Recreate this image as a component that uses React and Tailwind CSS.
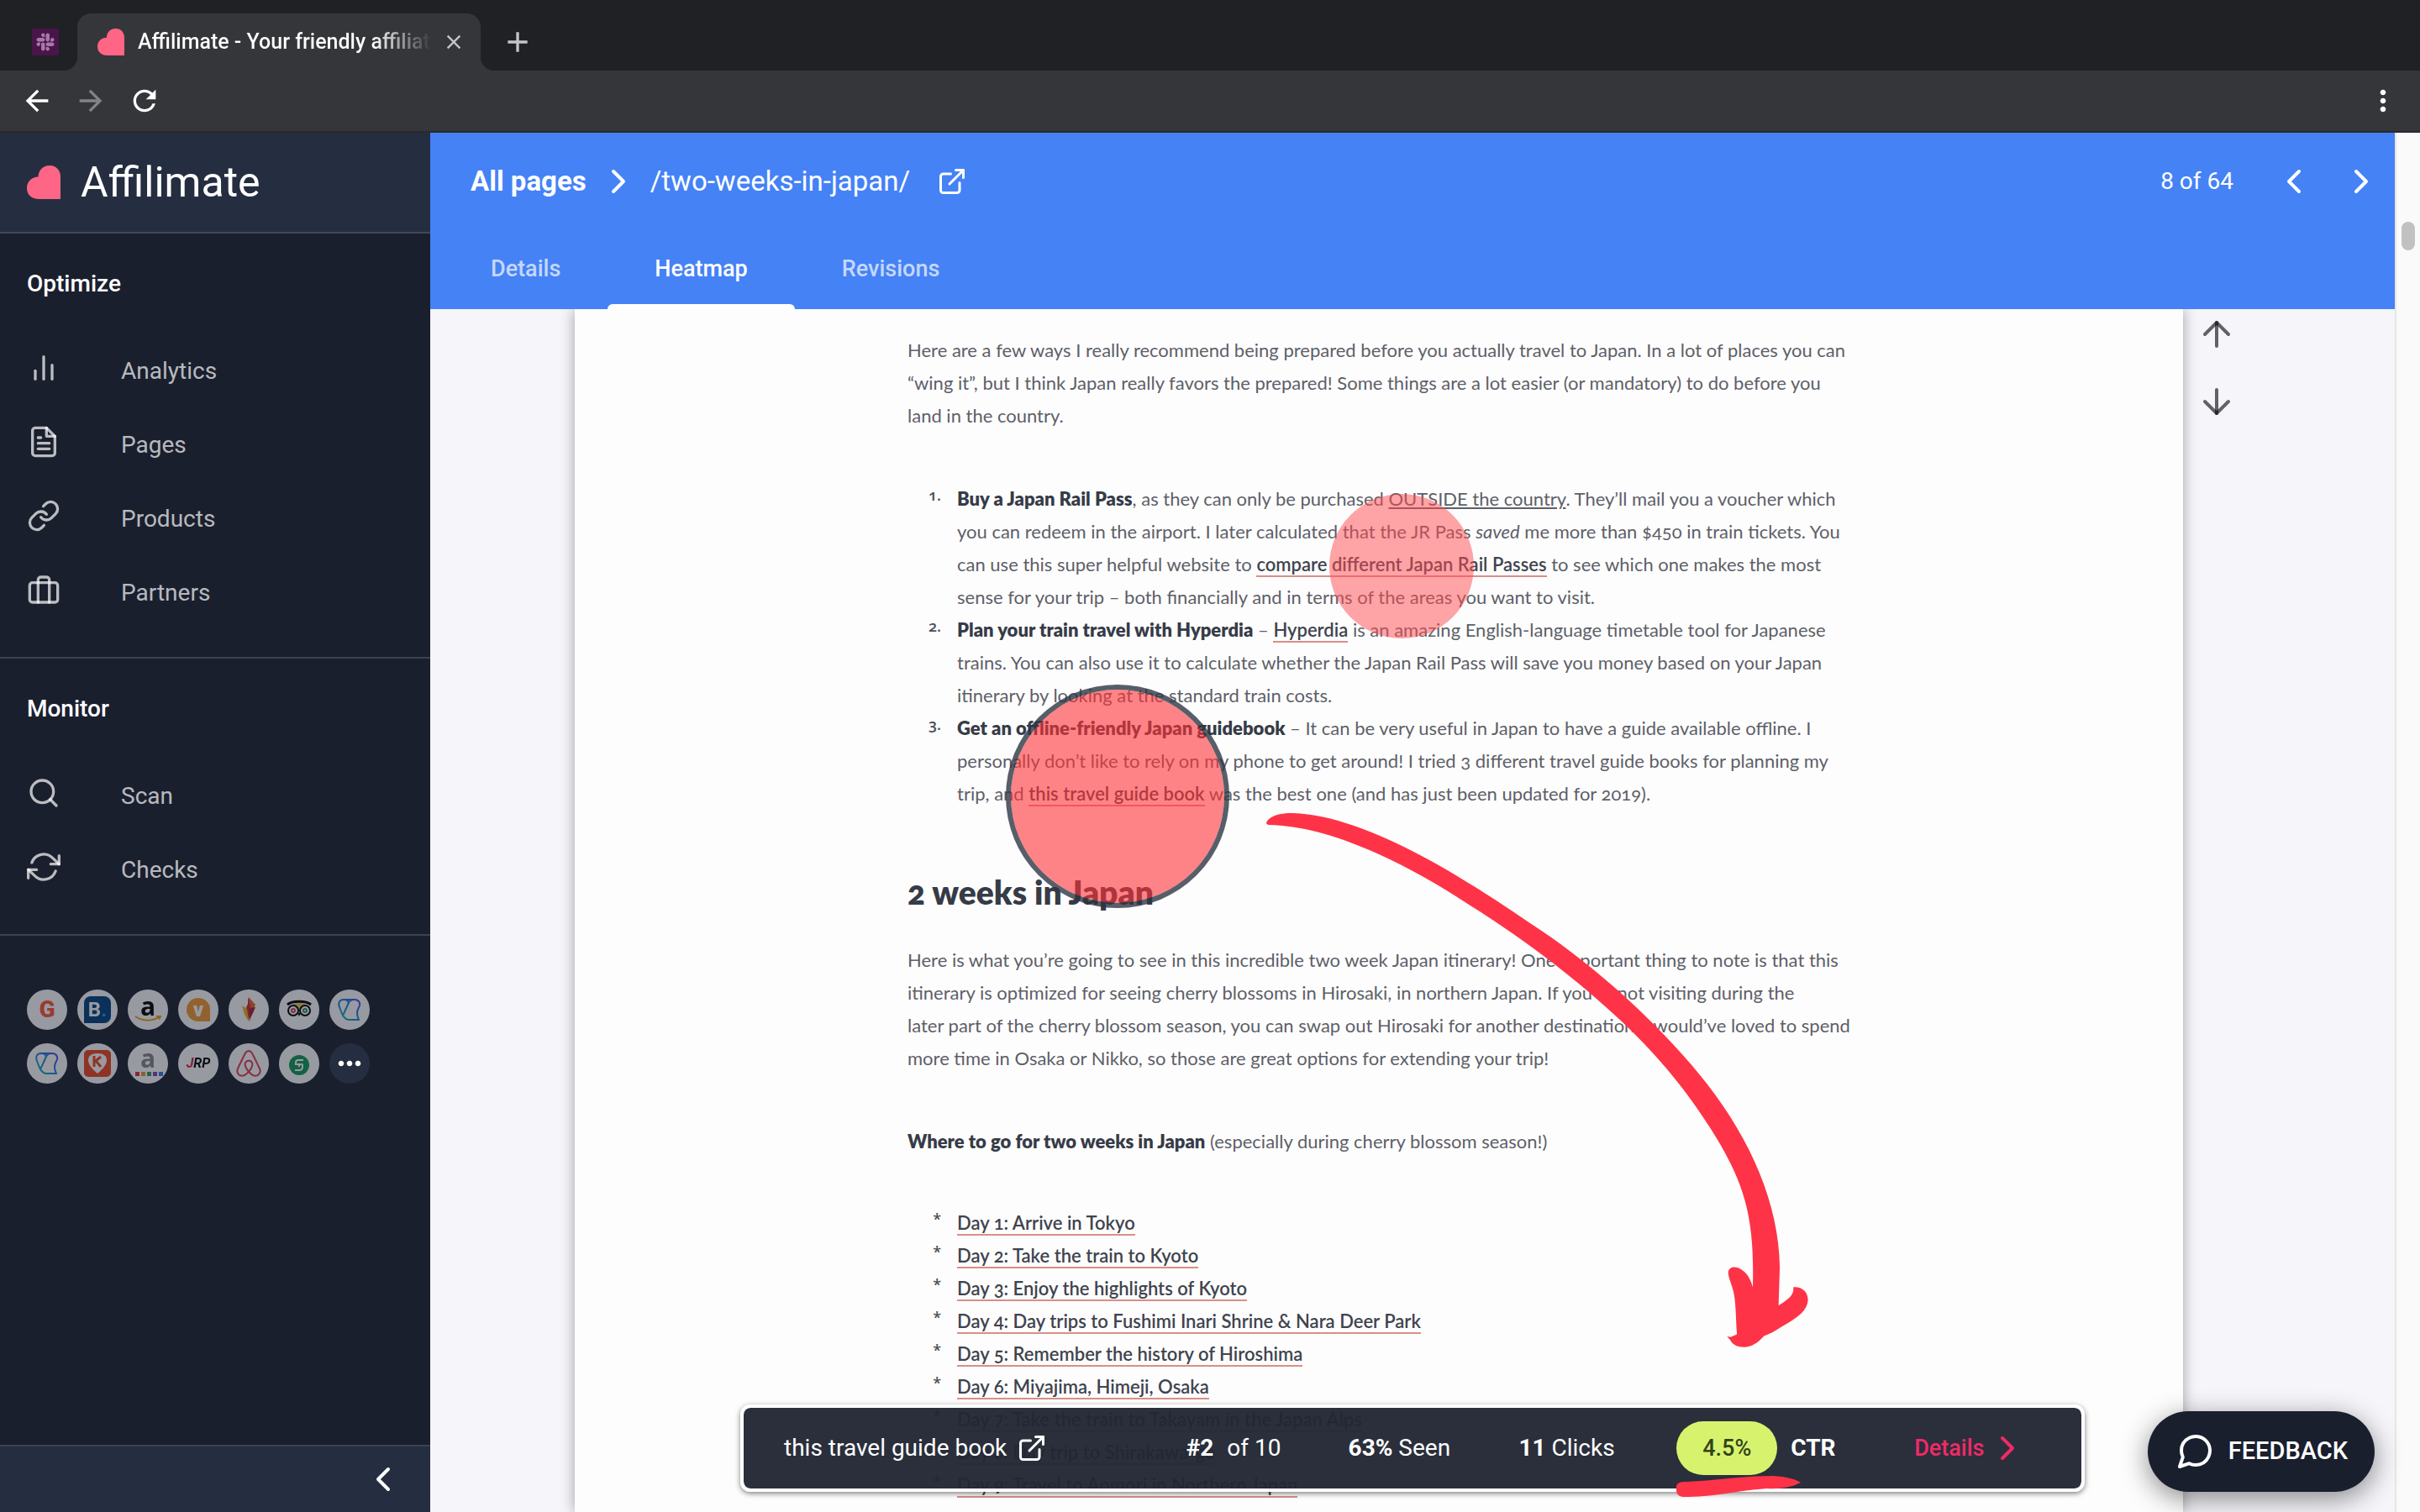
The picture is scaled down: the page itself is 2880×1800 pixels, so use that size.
import {
  FiArrowDown,
  FiArrowUp,
  FiBarChart2,
  FiBriefcase,
  FiChevronLeft,
  FiChevronRight,
  FiExternalLink,
  FiFileText,
  FiLink,
  FiMessageCircle,
  FiRefreshCw,
  FiSearch,
} from 'react-icons/fi'
import { MdAdd, MdArrowBack, MdArrowForward, MdClose, MdMoreHoriz, MdMoreVert, MdRefresh } from 'react-icons/md'
import { FaAirbnb, FaSlack } from 'react-icons/fa'

const sections = [
  {
    title: 'Optimize',
    items: [
      { label: 'Analytics', icon: FiBarChart2 },
      { label: 'Pages', icon: FiFileText },
      { label: 'Products', icon: FiLink },
      { label: 'Partners', icon: FiBriefcase },
    ],
  },
  {
    title: 'Monitor',
    items: [
      { label: 'Scan', icon: FiSearch },
      { label: 'Checks', icon: FiRefreshCw },
    ],
  },
]

const tabs = ['Details', 'Heatmap', 'Revisions']

const days = [
  'Day 1: Arrive in Tokyo',
  'Day 2: Take the train to Kyoto',
  'Day 3: Enjoy the highlights of Kyoto',
  'Day 4: Day trips to Fushimi Inari Shrine & Nara Deer Park',
  'Day 5: Remember the history of Hiroshima',
  'Day 6: Miyajima, Himeji, Osaka',
  'Day 7: Take the train to Takayam in the Japan Alps',
  'Day 8: Day trip to Shirakawa-go',
  'Day 9: Travel to Aomori in Northern Japan',
]

function Logo({ className }) {
  return (
    <svg viewBox="0 0 40 40" className={className} aria-hidden="true">
      <path
        d="M40 40H14C6 40 0 35 0 27C0 19 6 13.500 13.500 13.500C14 5.500 19 0 27 0C35 0 40 6 40 13Z"
        fill="#ff6584"
      />
    </svg>
  )
}

function BrowserChrome() {
  return (
    <header className="bg-[#202124]">
      <div className="flex h-[84px] items-end">
        <div className="flex h-[68px] w-[92px] items-center pl-[38px]">
          <span className="flex size-8 items-center justify-center rounded-xs bg-[#4a154b] text-[#a878a8]">
            <FaSlack className="size-6" />
          </span>
        </div>
        <div className="relative flex h-[68px] w-[480px] items-center rounded-t-2xl bg-[#35363a] pr-[18px] pl-6">
          <Logo className="size-8 shrink-0" />
          <span className="ml-4 flex-1 overflow-hidden bg-linear-to-r from-white from-80% to-transparent bg-clip-text text-[25px] font-medium whitespace-nowrap text-transparent">
            Affilimate - Your friendly affiliate
          </span>
          <button aria-label="Close tab" className="ml-3 text-[#c3c5c9]">
            <MdClose className="size-7" />
          </button>
          <svg viewBox="0 0 16 16" className="absolute bottom-0 -left-4 size-4 fill-[#35363a]">
            <path d="M16 0V16H0A16 16 0 0 0 16 0Z" />
          </svg>
          <svg viewBox="0 0 16 16" className="absolute -right-4 bottom-0 size-4 fill-[#35363a]">
            <path d="M0 0V16H16A16 16 0 0 1 0 0Z" />
          </svg>
        </div>
        <button aria-label="New tab" className="ml-6 flex h-[68px] items-center text-[#c3c5c9]">
          <MdAdd className="size-10" />
        </button>
      </div>
      <div className="flex h-[74px] items-center gap-6 border-b-2 border-[#28292c] bg-[#35363a] px-6 text-white">
        <button aria-label="Back">
          <MdArrowBack className="size-10" />
        </button>
        <button aria-label="Forward" className="text-[#828387]">
          <MdArrowForward className="size-10" />
        </button>
        <button aria-label="Reload" className="flex-1">
          <MdRefresh className="size-10" />
        </button>
        <button aria-label="Menu">
          <MdMoreVert className="size-10" />
        </button>
      </div>
    </header>
  )
}

function Twin() {
  return (
    <svg viewBox="0 0 48 48" className="size-12" fill="none" strokeWidth="2" strokeLinejoin="round">
      <defs>
        <linearGradient id="twin" x1="0" y1="1" x2="1" y2="0">
          <stop offset="0" stopColor="#0fbfa0" />
          <stop offset="0.500" stopColor="#1d7fe0" />
          <stop offset="1" stopColor="#4a4af0" />
        </linearGradient>
      </defs>
      <path
        d="M17 12H30C34 12 37 15 36 19C35 22 33 24 33 28C33 32 34 34 35 36H23C19 36 17 33 15 29L12 21C10 16 12 12 17 12C21 12 24 14 22 18L16 31"
        stroke="url(#twin)"
      />
      <path d="M22 18C23 15 25 12 29 12" stroke="url(#twin)" />
    </svg>
  )
}

function Flame() {
  return (
    <svg viewBox="0 0 48 48" className="size-12">
      <path d="M24 9L32 18L29 25L25 38L24 30Z" fill="#f0622d" />
      <path d="M23 9L26 19L24 38L20 24L23 17Z" fill="#d8232f" />
      <path d="M16 19L22 23L24 38L19 30Z" fill="#e8b71a" />
      <path d="M25 22L32 21L29 28L25 36Z" fill="#a51c30" />
    </svg>
  )
}

function Owl() {
  return (
    <svg viewBox="0 0 48 48" className="size-12" fill="none">
      <path d="M16 18C20 15 28 15 32 18L24 25Z" fill="#e8c95a" />
      <path d="M10 18C16 13 32 13 38 18" stroke="#000" strokeWidth="3" />
      <circle cx="17" cy="25" r="6" stroke="#000" strokeWidth="2" />
      <circle cx="31" cy="25" r="6" stroke="#000" strokeWidth="2" />
      <circle cx="17" cy="25" r="2" stroke="#d0405a" strokeWidth="2" />
      <circle cx="31" cy="25" r="2" stroke="#2f8f6a" strokeWidth="2" />
      <path d="M22 28L24 32L26 28Z" fill="#000" />
    </svg>
  )
}

function Amazon() {
  return (
    <span className="relative flex size-12 justify-center font-['Open_Sans'] text-3xl leading-10 font-bold text-black">
      a
      <svg viewBox="0 0 32 8" className="absolute top-[31px] left-2 h-2 w-8" fill="none">
        <path d="M1 1C10 7 21 7 29 2M26 1L31 0.500L29.500 4.500" stroke="#f09a1a" strokeWidth="2" />
      </svg>
    </span>
  )
}

function AmazonGrey() {
  return (
    <span className="relative flex size-12 justify-center font-['Open_Sans'] text-3xl leading-9 font-bold text-[#85858b]">
      a
      <span className="absolute top-[34px] left-[9px] flex gap-[2px]">
        <i className="size-[5px] bg-[#e02c3c]" />
        <i className="size-[5px] bg-[#e8952c]" />
        <i className="size-[5px] bg-[#2c9f4c]" />
        <i className="size-[5px] bg-[#8c3ccf]" />
        <i className="size-[5px] bg-[#2c7ce0]" />
      </span>
    </span>
  )
}

const partners = [
  { name: 'GetYourGuide', mark: <b className="text-[28px] font-black text-[#ff5533]">G</b> },
  {
    name: 'Booking.com',
    mark: (
      <span className="flex size-8 items-center justify-center rounded-lg rounded-bl-none bg-[#00417f] text-2xl font-bold text-white">
        B<span className="text-[#0f9be8]">.</span>
      </span>
    ),
  },
  { name: 'Amazon', mark: <Amazon /> },
  {
    name: 'Viator',
    mark: (
      <span className="flex size-7 items-center justify-center rounded-full rounded-br-none bg-[#f59a2e] text-2xl font-black text-white">
        v
      </span>
    ),
  },
  { name: 'Skimlinks', mark: <Flame /> },
  { name: 'TripAdvisor', mark: <Owl /> },
  { name: 'Partnerize', mark: <Twin /> },
  { name: 'Partnerize 2', mark: <Twin /> },
  {
    name: 'Klook',
    mark: (
      <svg viewBox="0 0 32 32" className="size-8">
        <rect width="32" height="32" rx="5" fill="#f0441f" />
        <path d="M16 28C9 22 5 17 5 12C5 7 9 4 16 4C23 4 27 7 27 12C27 17 23 22 16 28Z" fill="#fff" />
        <path d="M12 7V20M20 8L14 13L20 20" stroke="#f0441f" strokeWidth="3" fill="none" />
      </svg>
    ),
  },
  { name: 'Amazon Associates', mark: <AmazonGrey /> },
  {
    name: 'JRP',
    mark: (
      <b className="text-base italic text-black">
        <span className="text-[#e0203c]">J</span>RP
      </b>
    ),
  },
  { name: 'Airbnb', mark: <FaAirbnb className="size-9 text-[#e8384f]" /> },
  {
    name: 'ShareASale',
    mark: (
      <svg viewBox="0 0 24 24" className="mt-1 size-6" fill="none">
        <circle cx="12" cy="12" r="12" fill="#0f9a55" />
        <path d="M17 6H11Q8 6 8 9V11H15Q16 11 16 12V14Q16 18 12 18H7M12 11V14" stroke="#fff" strokeWidth="2" />
      </svg>
    ),
  },
]

function Sidebar() {
  return (
    <aside className="flex w-[512px] shrink-0 flex-col bg-[#1a1f2e] text-white">
      <a href="#home" className="flex h-[120px] items-center gap-6 border-b-2 border-[#424959] bg-[#252e40] px-8">
        <Logo className="size-10" />
        <span className="text-[50px]">Affilimate</span>
      </a>

      {sections.map(section => (
        <nav key={section.title} className="border-b-2 border-[#3b4250] px-8 pt-10 pb-8">
          <h2 className="mb-10 text-[28px] leading-10 font-medium">{section.title}</h2>
          <ul>
            {section.items.map(({ label, icon: Icon }) => (
              <li key={label}>
                <a href={`#${label.toLowerCase()}`} className="flex h-[88px] items-center text-[28px] text-white/70">
                  <Icon className="mr-[72px] mb-2 size-10" />
                  {label}
                </a>
              </li>
            ))}
          </ul>
        </nav>
      ))}

      <ul className="flex flex-wrap gap-x-3 gap-y-4 px-8 pt-16">
        {partners.map(partner => (
          <li
            key={partner.name}
            title={partner.name}
            className="flex size-12 items-center justify-center rounded-full bg-white leading-none opacity-55"
          >
            {partner.mark}
          </li>
        ))}
        <li>
          <button
            aria-label="More partners"
            className="flex size-12 items-center justify-center rounded-full bg-[#252e40]"
          >
            <MdMoreHoriz className="size-10" />
          </button>
        </li>
      </ul>

      <div className="mt-auto flex h-20 items-center justify-end border-t-2 border-[#3b4250] bg-[#252e40] px-8">
        <button aria-label="Collapse sidebar">
          <FiChevronLeft className="size-12" />
        </button>
      </div>
    </aside>
  )
}

function PageHeader() {
  return (
    <div className="flex h-[210px] shrink-0 flex-col justify-between bg-[#4582f6] text-white">
      <div className="flex items-center pt-[34px] pr-4 pl-12 text-[33px] leading-12">
        <a href="#pages" className="font-bold">
          All pages
        </a>
        <FiChevronRight className="mx-[14px] size-12" />
        <span>/two-weeks-in-japan/</span>
        <a href="#open" aria-label="Open page" className="ml-8">
          <FiExternalLink className="size-9" />
        </a>
        <span className="ml-auto text-[28px]">8 of 64</span>
        <button aria-label="Previous page" className="ml-12">
          <FiChevronLeft className="size-12" />
        </button>
        <button aria-label="Next page" className="ml-8">
          <FiChevronRight className="size-12" />
        </button>
      </div>
      <div role="tablist" className="flex pl-4">
        {tabs.map(tab => (
          <button
            key={tab}
            role="tab"
            aria-selected={tab === 'Heatmap'}
            className={`relative h-24 px-14 text-[27px] font-medium ${
              tab === 'Heatmap' ? 'text-white' : 'text-white/70'
            }`}
          >
            {tab}
            {tab === 'Heatmap' && <span className="absolute inset-x-0 bottom-0 h-[6px] rounded-t-md bg-white" />}
          </button>
        ))}
      </div>
    </div>
  )
}

function Strong({ children }) {
  return <strong className="font-extrabold text-[#363b47]">{children}</strong>
}

function TextLink({ children }) {
  return (
    <a href="#link" className="border-b-2 border-[#d98f88] font-semibold text-[#3f444e]">
      {children}
    </a>
  )
}

function Step({ number, children }) {
  return (
    <li className="flex">
      <span className="-mt-1 w-10 shrink-0 text-right font-['Open_Sans'] text-lg leading-[39px] font-semibold text-[#4a4f59]">
        {number}
      </span>
      <div className="ml-[19px] whitespace-nowrap">{children}</div>
    </li>
  )
}

function Article() {
  return (
    <article className="px-[396px] pt-[29px] font-['Lato',sans-serif] text-[22px] leading-[39px] whitespace-nowrap text-[#5d6068] oldstyle-nums">
      <p>
        Here are a few ways I really recommend being prepared before you actually travel to Japan. In a lot of places you can
        <br />
        “wing it”, but I think Japan really favors the prepared! Some things are a lot easier (or mandatory) to do before you
        <br />
        land in the country.
      </p>

      <ol className="mt-[60px]">
        <Step number="1.">
          <Strong>Buy a Japan Rail Pass</Strong>, as they can only be purchased{' '}
          <a href="#outside" className="underline">
            OUTSIDE the country
          </a>
          . They’ll mail you a voucher which
          <br />
          you can redeem in the airport. I later calculated that the JR Pass <em>saved</em> me more than $450 in train
          tickets. You
          <br />
          can use this super helpful website to <TextLink>compare different Japan Rail Passes</TextLink> to see which one
          makes the most
          <br />
          sense for your trip – both financially and in terms of the areas you want to visit.
        </Step>
        <Step number="2.">
          <Strong>Plan your train travel with Hyperdia</Strong> – <TextLink>Hyperdia</TextLink> is an amazing
          English-language timetable tool for Japanese
          <br />
          trains. You can also use it to calculate whether the Japan Rail Pass will save you money based on your Japan
          <br />
          itinerary by looking at the standard train costs.
        </Step>
        <Step number="3.">
          <Strong>Get an offline-friendly Japan guidebook</Strong> – It can be very useful in Japan to have a guide
          available offline. I
          <br />
          personally don’t like to rely on my phone to get around! I tried 3 different travel guide books for planning my
          <br />
          trip, and <TextLink>this travel guide book</TextLink> was the best one (and has just been updated for 2019).
        </Step>
      </ol>

      <h2 className="mt-[73px] text-[39px] leading-[50px] font-extrabold text-[#363b47]">2 weeks in Japan</h2>

      <p className="mt-9">
        Here is what you’re going to see in this incredible two week Japan itinerary! One important thing to note is that
        this
        <br />
        itinerary is optimized for seeing cherry blossoms in Hirosaki, in northern Japan. If you’re not visiting during the
        <br />
        later part of the cherry blossom season, you can swap out Hirosaki for another destination. I would’ve loved to
        spend
        <br />
        more time in Osaka or Nikko, so those are great options for extending your trip!
      </p>

      <p className="mt-[60px]">
        <Strong>Where to go for two weeks in Japan</Strong> (especially during cherry blossom season!)
      </p>

      <ul className="mt-[58px]">
        {days.map(day => (
          <Step key={day} number="*">
            <TextLink>{day}</TextLink>
          </Step>
        ))}
      </ul>
    </article>
  )
}

function HeatmapPage() {
  return (
    <div className="relative flex-1 bg-[#fdfdfd] shadow-[0_0_16px_rgba(0,0,0,0.35)]">
      <Article />
      <div className="absolute top-[220px] left-[898px] size-[172px] rounded-full bg-[#ff4a4f]/50" />
      <div className="absolute top-[447px] left-[513px] size-[266px] rounded-full border-[6px] border-[#2d3642]/80 bg-[#ff3237]/60 bg-clip-padding" />
      <svg viewBox="0 0 1568 1568" className="absolute top-[532px] left-[796px] size-[740px]" fill="#ff3347">
        <path d="M57 170C60 155 85 143 125 144C300 150 530 290 720 420C860 510 1010 640 1130 780C1260 930 1350 1110 1352 1290L1349 1386C1367 1374 1390 1362 1386 1340C1408 1338 1424 1352 1423 1374C1420 1400 1400 1412 1372 1431C1350 1444 1330 1458 1312 1463C1298 1480 1280 1491 1262 1491C1245 1491 1232 1484 1228 1474L1219 1464L1228 1466L1244 1459C1241 1420 1242 1390 1237 1360C1233 1335 1222 1318 1222 1302C1224 1288 1240 1286 1253 1294C1268 1302 1278 1318 1284 1340C1288 1180 1270 1090 1190 960C1080 780 960 670 840 570C730 480 640 420 560 370C440 290 230 175 62 174Z" />
      </svg>
    </div>
  )
}

function LinkStats() {
  return (
    <div className="absolute inset-x-0 bottom-6 flex justify-center text-[28px] text-white">
      <div className="relative grid h-[104px] w-[1600px] grid-cols-[479fr_193fr_203fr_188fr_283fr_199fr] items-center rounded-xl border-4 border-white bg-[#212633]/96 bg-clip-padding pl-12 shadow-[0_2px_6px_rgba(0,0,0,0.5)]">
        <a href="#book" className="flex items-center gap-3">
          this travel guide book
          <FiExternalLink className="size-9" />
        </a>
        <span className="flex gap-4">
          <b>#2</b> of 10
        </span>
        <span>
          <b>63%</b> Seen
        </span>
        <span>
          <b>11</b> Clicks
        </span>
        <span className="relative flex items-center gap-4 font-bold">
          <span className="flex h-16 w-[120px] items-center justify-center rounded-full bg-[#d7f36e] text-[27px] font-medium text-[#33431a]">
            4.5%
          </span>
          CTR
          <svg viewBox="0 0 148 25" className="absolute top-[65px] left-0 h-[25px] w-[148px]" fill="#ff3347">
            <path d="M0 12C1 8 5 7 12 7C45 6 75 0 115 0C132 1 142 4 148 8C138 13 125 16 108 15C75 17 45 25 15 25C6 26 1 24 0 18Z" />
          </svg>
        </span>
        <a href="#details" className="flex items-center gap-1 text-[27px] font-medium text-[#f02a66]">
          Details
          <FiChevronRight className="size-12" />
        </a>
      </div>
    </div>
  )
}

export default function App() {
  return (
    <div className="flex h-screen flex-col overflow-hidden font-['Roboto',sans-serif]">
      <BrowserChrome />
      <div className="flex min-h-0 flex-1">
        <Sidebar />
        <main className="relative flex min-w-0 flex-1 flex-col">
          <PageHeader />
          <div className="flex min-h-0 flex-1 overflow-hidden bg-[#f5f5fa] px-[172px]">
            <HeatmapPage />
            <div className="flex w-20 flex-col items-center gap-8 pt-[6px] text-black/60">
              <button aria-label="Scroll up">
                <FiArrowUp className="size-12" />
              </button>
              <button aria-label="Scroll down">
                <FiArrowDown className="size-12" />
              </button>
            </div>
          </div>
          <LinkStats />
          <button className="absolute right-6 bottom-6 flex h-24 items-center gap-4 rounded-full bg-[#1a1f2e] px-8 text-[29px] font-medium text-white shadow-[0_8px_32px_rgba(0,0,0,0.45)]">
            <FiMessageCircle className="size-12" />
            FEEDBACK
          </button>
        </main>
        <div className="w-[30px] border-l-2 border-[#e6e6e6] bg-[#fafafa] pt-[106px]">
          <div className="mx-auto h-[34px] w-4 rounded-full bg-[#c1c1c1]" />
        </div>
      </div>
    </div>
  )
}
